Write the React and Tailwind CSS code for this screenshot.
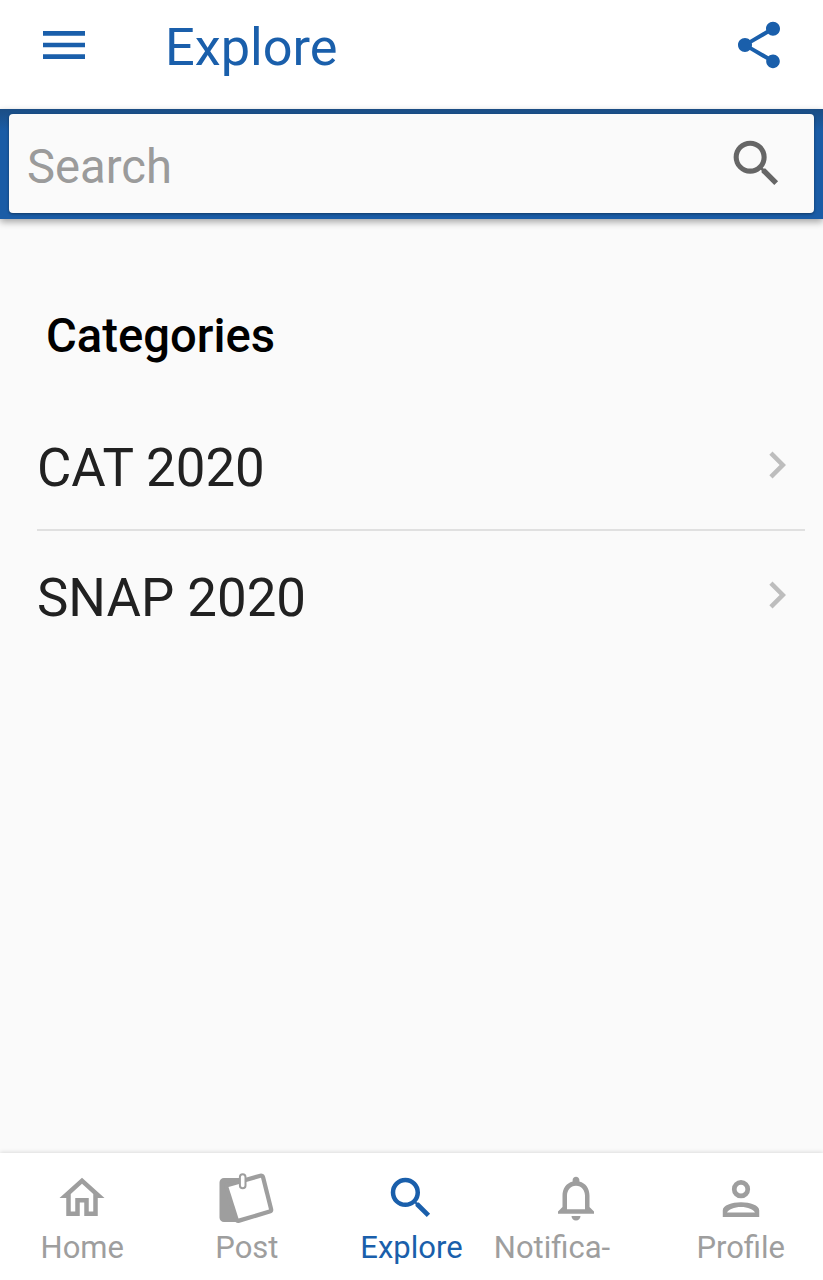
import React, { useState } from 'react'
import { MdChevronRight, MdMenu, MdNotificationsNone, MdOutlineHome, MdSearch, MdShare } from 'react-icons/md'

const categories = ['CAT 2020', 'SNAP 2020']

const NotePadIcon = () => (
  <svg viewBox="0 0 56 54" className="h-[54px] w-[56px]" fill="none">
    <path d="M5 7h22v8L12 17l8 34H5a4.500 4.500 0 0 1-4.500-4.500V11.500A4.500 4.500 0 0 1 5 7z" fill="currentColor" />
    <path
      d="M9.500 16 42 6.800 50 38.500 19.500 47.600z"
      fill="currentColor"
      stroke="currentColor"
      strokeWidth="8.500"
      strokeLinejoin="round"
    />
    <path d="M9.500 16 42 6.800 50 38.500 19.500 47.600z" fill="#fff" />
    <rect x="20.900" y="3.300" width="5.600" height="14" rx="2.800" fill="#fff" stroke="currentColor" strokeWidth="2" />
  </svg>
)

const PersonIcon = () => (
  <svg viewBox="0 0 24 24" className="size-[54px]" fill="currentColor">
    <circle cx="12" cy="8.100" r="3" fill="none" stroke="currentColor" strokeWidth="2.100" />
    <path
      fillRule="evenodd"
      d="M3.900 20.400v-2.900c0-2.200 4-3.600 8.100-3.600s8.100 1.400 8.100 3.600v2.900zM5.800 18.400h12.400c-.5-1.200-3.200-2.400-6.200-2.400s-5.700 1.200-6.200 2.400z"
    />
  </svg>
)

const tabs = [
  { label: 'Home', icon: <MdOutlineHome className="size-[54px]" /> },
  { label: 'Post', icon: <NotePadIcon /> },
  { label: 'Explore', icon: <MdSearch className="size-[54px]" /> },
  { label: 'Notifica-', icon: <MdNotificationsNone className="size-[54px]" />, clipped: true },
  { label: 'Profile', icon: <PersonIcon /> },
]

const App = () => {
  const [query, setQuery] = useState('')
  const [activeTab, setActiveTab] = useState('Explore')

  return (
    <div className="flex h-[1280px] w-[823px] flex-col overflow-hidden bg-[#fafafa] font-['Roboto',sans-serif]">
      <header className="flex h-[109px] shrink-0 items-start bg-white pl-9 pr-9 text-[#1a5fab]">
        <button aria-label="Menu" className="mt-[17px]">
          <MdMenu className="size-14" />
        </button>
        <h1 className="ml-[73px] mt-[17px] flex-1 text-[52.300px] leading-[60px]">Explore</h1>
        <button aria-label="Share" className="mt-[17px]">
          <MdShare className="size-14" />
        </button>
      </header>

      <div className="h-[110px] shrink-0 bg-linear-to-b from-[#1b4d84] to-[#1a5ca6] to-20% px-[9px] pt-[5px] shadow-[0_3px_7px_rgba(0,0,0,0.35)]">
        <label className="flex h-[99px] items-center rounded-[4px] bg-[#fafafa] pl-[18px] pr-[27px] shadow-[0_1px_3px_rgba(0,0,0,0.4)]">
          <input
            value={query}
            onChange={(event) => setQuery(event.target.value)}
            placeholder="Search"
            className="mt-2 h-[60px] min-w-0 flex-1 text-[47.200px] text-[#212121] outline-none placeholder:text-[#9b9b9b]"
          />
          <MdSearch className="size-[61px] shrink-0 text-[#666666]" />
        </label>
      </div>

      <main className="flex-1">
        <h2 className="ml-[46px] mt-[87px] text-[47.200px] font-medium leading-[60px] text-black">Categories</h2>
        <ul className="ml-[37px] mr-[18px] mt-[35px]">
          {categories.map((name) => (
            <li
              key={name}
              className="flex h-[130px] items-center justify-between border-b-2 border-[#e0e0e0] last:border-transparent"
            >
              <span className="mt-[6px] text-[52.800px] leading-[60px] text-[#212121]">{name}</span>
              <MdChevronRight className="mr-px size-[54px] text-[#bdbdbd]" />
            </li>
          ))}
        </ul>
      </main>

      <nav className="grid h-[127px] shrink-0 grid-cols-5 bg-white shadow-[0_-1px_4px_rgba(0,0,0,0.12)]">
        {tabs.map((tab) => (
          <button
            key={tab.label}
            onClick={() => setActiveTab(tab.label)}
            className={`flex flex-col items-center pt-[18px] ${activeTab === tab.label ? 'text-[#1a5fab]' : 'text-[#9e9e9e]'}`}
          >
            <span className="flex h-[54px] items-center">{tab.icon}</span>
            <span className={`mt-[4px] text-[31px] leading-[38px] ${tab.clipped ? 'self-start' : ''}`}>{tab.label}</span>
          </button>
        ))}
      </nav>
    </div>
  )
}

export default App
